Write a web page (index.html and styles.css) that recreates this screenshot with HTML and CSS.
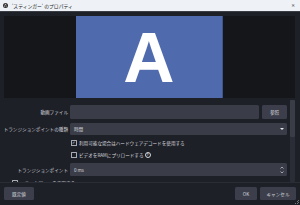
FILE: index.html
```html
<!DOCTYPE html>
<html lang="ja">
<head>
<meta charset="utf-8">
<title>スティンガー のプロパティ</title>
<link rel="stylesheet" href="styles.css">
</head>
<body>
<div class="window">
  <div class="titlebar">
    <svg class="appicon" width="5" height="5" viewBox="0 0 10 10">
      <circle cx="5" cy="5" r="5" fill="#2c2c2c"/>
      <circle cx="5" cy="3" r="1.6" fill="#bbb"/>
      <circle cx="3.2" cy="6.3" r="1.6" fill="#999"/>
      <circle cx="6.8" cy="6.3" r="1.6" fill="#777"/>
    </svg>
    <span class="title">'スティンガー' のプロパティ</span>
    <span class="close">✕</span>
  </div>
  <div class="preview">
    <div class="pad"></div>
    <div class="source"><span class="bigA">A</span></div>
    <div class="pad grow"></div>
  </div>
  <div class="props">
    <div class="content">
      <div class="row r-input">
        <span class="label">動画ファイル</span>
        <div class="field">
          <div class="input"></div>
          <div class="btn browse">参照</div>
        </div>
      </div>
      <div class="row r-select">
        <span class="label">トランジションポイントの種類</span>
        <div class="select"><span>時間</span><span class="arrow"></span></div>
      </div>
      <div class="row r-check">
        <span class="label"></span>
        <div class="check"><span class="box checked">✓</span><span>利用可能な場合はハードウェアデコードを使用する</span></div>
      </div>
      <div class="row r-check">
        <span class="label"></span>
        <div class="check"><span class="box"></span><span>ビデオをRAMにプリロードする</span><span class="help">?</span></div>
      </div>
      <div class="row r-spin">
        <span class="label">トランジションポイント</span>
        <div class="spin"><span>0 ms</span>
          <span class="spinbtns">
            <svg width="4" height="3" viewBox="0 0 8 6"><path d="M1 5 L4 2 L7 5" fill="none" stroke="#cfd2d9" stroke-width="1.4"/></svg>
            <svg width="4" height="3" viewBox="0 0 8 6"><path d="M1 1 L4 4 L7 1" fill="none" stroke="#cfd2d9" stroke-width="1.4"/></svg>
          </span>
        </div>
      </div>
      <div class="row r-full">
        <div class="check"><span class="box"></span><span>トラックマットを使用する</span></div>
      </div>
    </div>
    <div class="scrollbar"><div class="thumb"></div></div>
  </div>
  <div class="footer">
    <div class="btn fbtn">既定値</div>
    <div class="spacer"></div>
    <div class="btn fbtn ok">OK</div>
    <div class="btn fbtn cancel">キャンセル</div>
    <svg class="grip" width="4" height="4" viewBox="0 0 4 4">
      <rect x="3" y="0" width="1" height="1" fill="#777"/>
      <rect x="2" y="1" width="1" height="1" fill="#777"/>
      <rect x="3" y="2" width="1" height="1" fill="#777"/>
      <rect x="0" y="3" width="1" height="1" fill="#777"/>
      <rect x="2" y="3" width="1" height="1" fill="#777"/>
    </svg>
  </div>
</div>
</body>
</html>
```
FILE: styles.css
```css
html, body {
  margin: 0;
  padding: 0;
  background: #1e2028;
}
body {
  width: 300px;
  height: 205px;
  overflow: hidden;
  font-family: "Noto Sans CJK JP", "Noto Sans", sans-serif;
  font-size: 4.6px;
  color: #d6d8de;
}
.window {
  position: relative;
  width: 300px;
  height: 205px;
  display: flex;
  flex-direction: column;
}
.titlebar {
  height: 11px;
  background: #eef2f7;
  border-bottom: 1px solid #3a3d46;
  display: flex;
  align-items: center;
  padding-left: 2.5px;
  padding-right: 5px;
  color: #222;
  flex-shrink: 0;
}
.appicon { margin-right: 4.5px; }
.title { font-size: 4.8px; }
.close {
  margin-left: auto;
  font-family: "DejaVu Sans", sans-serif;
  font-size: 4.5px;
  color: #555;
}
.preview {
  margin: 3.5px 5px 0 4px;
  height: 82.5px;
  display: flex;
  flex-shrink: 0;
}
.pad {
  width: 72px;
  background: #14161a;
}
.pad.grow { flex: 1; }
.source {
  width: 146px;
  background: #506aae;
  border-right: 1px solid #3e5490;
  display: flex;
  align-items: center;
  justify-content: center;
  overflow: hidden;
}
.bigA {
  font-family: "Liberation Sans", Arial, sans-serif;
  font-weight: bold;
  font-size: 71px;
  line-height: 1;
  color: #fff;
  margin-top: 1px;
}
.props {
  margin-top: 2px;
  height: 82px;
  display: flex;
  flex-shrink: 0;
  overflow: hidden;
}
.content {
  width: 287px;
  padding-top: 5px;
  display: flex;
  flex-direction: column;
  gap: 4px;
  overflow: hidden;
}
.scrollbar {
  width: 5px;
  margin-left: 3px;
  background: #2a2d36;
  border-radius: 1px;
}
.thumb {
  height: 37px;
  background: #3a3d48;
  border-radius: 1px;
}
.row {
  display: grid;
  grid-template-columns: 68px 1fr;
  column-gap: 2px;
  align-items: center;
  flex-shrink: 0;
}
.label {
  text-align: right;
  white-space: nowrap;
}
.r-input { height: 14px; }
.r-select { height: 12px; }
.r-check { height: 8px; }
.r-spin { height: 13px; }
.r-full {
  height: 8px;
  display: flex;
  padding-left: 11px;
  margin-top: -1px;
}
.field {
  display: flex;
  height: 100%;
  gap: 3px;
}
.input {
  flex: 1;
  background: #3a3d48;
  border-radius: 1.5px;
}
.btn {
  background: #3c3f4b;
  border-radius: 1.5px;
  display: flex;
  align-items: center;
  justify-content: center;
  color: #d6d8de;
  white-space: nowrap;
}
.browse { width: 25px; }
.select, .spin {
  height: 100%;
  background: #3a3d48;
  border-radius: 1.5px;
  display: flex;
  align-items: center;
  padding-left: 4px;
  padding-right: 3px;
}
.arrow {
  margin-left: auto;
  width: 0;
  height: 0;
  border-left: 2px solid transparent;
  border-right: 2px solid transparent;
  border-top: 2px solid #e4e6ea;
}
.spinbtns {
  margin-left: auto;
  display: flex;
  flex-direction: column;
  gap: 2px;
}
.spinbtns svg { display: block; }
.check {
  display: flex;
  align-items: center;
  gap: 2.5px;
  white-space: nowrap;
  padding-left: 1px;
}
.box {
  width: 3.5px;
  height: 3.5px;
  border: 0.6px solid #a8abb2;
  border-radius: 0.5px;
  display: flex;
  align-items: center;
  justify-content: center;
  font-family: "DejaVu Sans", sans-serif;
  font-size: 4px;
  line-height: 1;
  color: #e4e6ea;
}
.help {
  width: 4px;
  height: 4px;
  border: 0.6px solid #d6d8de;
  border-radius: 50%;
  display: flex;
  align-items: center;
  justify-content: center;
  font-family: "Liberation Sans", sans-serif;
  font-size: 3.5px;
  font-weight: bold;
  margin-left: -1.5px;
}
.footer {
  flex: 1;
  display: flex;
  align-items: flex-start;
  padding: 4px 4px 0 4px;
  gap: 3px;
  border-top: 1px solid #2a2d36;
}
.fbtn { height: 13px; }
.fbtn:first-child { width: 30px; }
.spacer { flex: 1; }
.ok { width: 22px; }
.cancel { width: 36px; }
.grip {
  position: absolute;
  right: 1px;
  bottom: 1px;
}
```
